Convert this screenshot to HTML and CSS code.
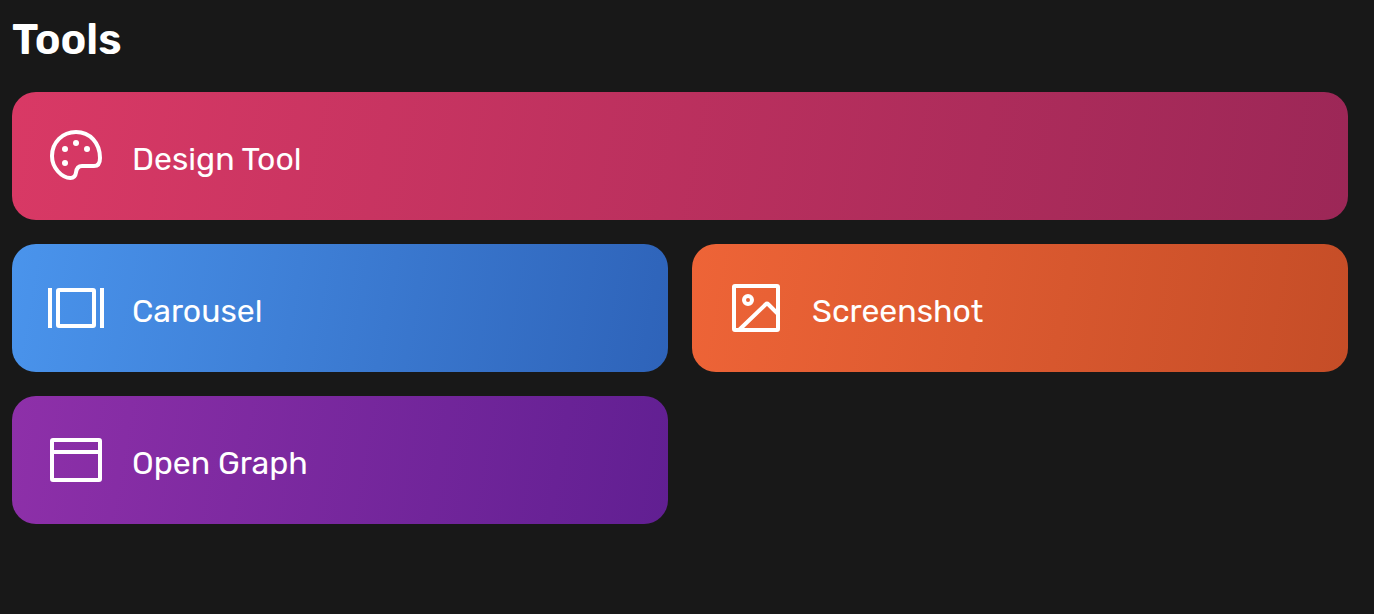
FILE: index.html
```html
<!DOCTYPE html>
<html lang="en">
<head>
<meta charset="utf-8">
<meta name="viewport" content="width=device-width, initial-scale=1">
<title>Tools</title>
<link rel="stylesheet" href="styles.css">
</head>
<body>
<main class="tools">
  <h1 class="title">Tools</h1>
  <nav class="grid" aria-label="Tools">
    <a class="card wide design" href="#design">
      <svg class="icon" viewBox="0 0 64 64" aria-hidden="true">
        <path d="M32 8C18.500 8 8 18.500 8 32C8 44 18 54 26.500 54C30 54 31.500 52 32 48.500C32.500 44.500 34.500 42 38 42H50C54 42 56 39.500 56 34C56 19 46 8 32 8Z"/>
        <g class="dots"><circle cx="32" cy="19" r="3"/><circle cx="43" cy="25" r="3"/><circle cx="21" cy="25" r="3"/><circle cx="21" cy="39" r="3"/></g>
      </svg>
      <span class="label">Design Tool</span>
    </a>
    <a class="card carousel" href="#carousel">
      <svg class="icon" viewBox="0 0 64 64" aria-hidden="true">
        <path d="M6 12V52M58 12V52"/><rect x="14" y="14" width="36" height="36" rx="1"/>
      </svg>
      <span class="label">Carousel</span>
    </a>
    <a class="card screenshot" href="#screenshot">
      <svg class="icon" viewBox="0 0 64 64" aria-hidden="true">
        <rect x="10" y="10" width="44" height="44" rx="1"/><circle cx="24" cy="24" r="4"/><path d="M15 54L41.500 28.500Q43 27 44.500 28.500L54 38"/>
      </svg>
      <span class="label">Screenshot</span>
    </a>
    <a class="card graph" href="#open-graph">
      <svg class="icon" viewBox="0 0 64 64" aria-hidden="true">
        <rect x="8" y="12" width="48" height="40" rx="1"/><path d="M8 24H56"/>
      </svg>
      <span class="label">Open Graph</span>
    </a>
  </nav>
</main>
</body>
</html>
```
FILE: styles.css
```css
* { box-sizing: border-box; }
body {
  margin: 0;
  background: #181818;
  color: #fff;
  font-family: Rubik, Roboto, sans-serif;
}
.tools { padding: 16px 26px 24px 12px; }
.title { margin: 0 0 28px; font-size: 43px; line-height: 48px; font-weight: 600; }
.grid { display: grid; grid-template-columns: 1fr 1fr; gap: 24px; }
.card {
  display: flex;
  align-items: center;
  gap: 24px;
  min-height: 128px;
  padding: 24px 32px;
  border-radius: 24px;
  color: #fff;
  font-size: 32px;
  line-height: 40px;
  text-decoration: none;
}
.label { padding-top: 6px; }
.wide { grid-column: 1 / -1; }
.design { background: linear-gradient(100deg, #d93965, #9c2757); }
.carousel { background: linear-gradient(100deg, #4a94ec, #2e63b9); }
.screenshot { background: linear-gradient(100deg, #ee6437, #c54d27); }
.graph { background: linear-gradient(100deg, #8e30a9, #611f92); }
.icon { flex: none; width: 64px; height: 64px; fill: none; stroke: #fff; stroke-width: 4; }
.dots { fill: #fff; stroke: none; }
```
